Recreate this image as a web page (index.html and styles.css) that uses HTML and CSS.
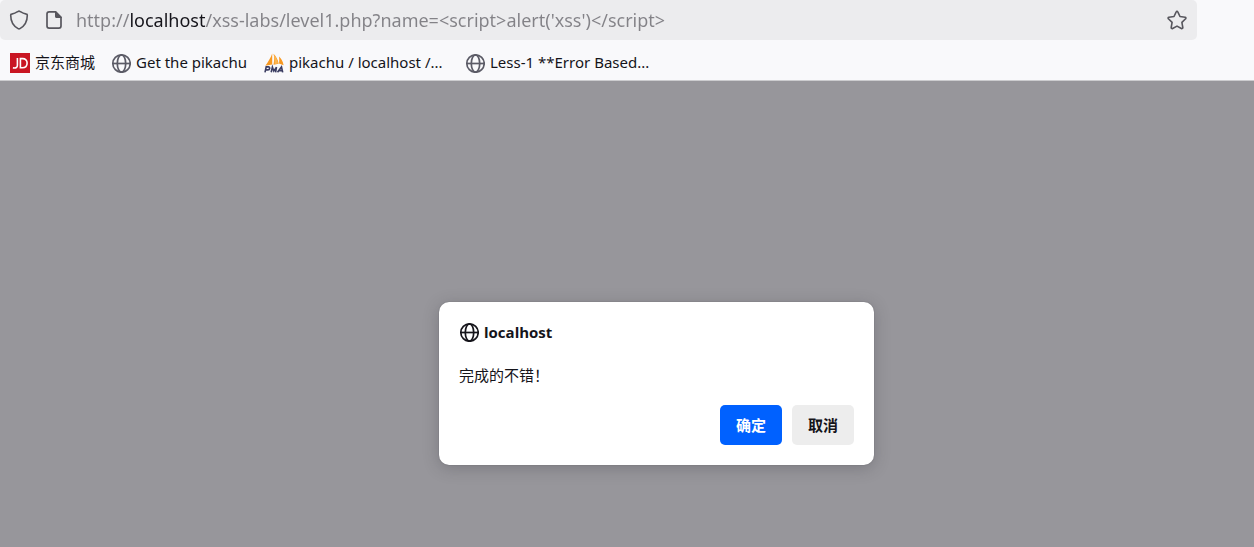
FILE: index.html
```html
<!DOCTYPE html>
<html lang="zh-CN">
<head>
<meta charset="utf-8">
<title>localhost</title>
<link rel="stylesheet" href="styles.css">
</head>
<body>
<svg class="defs" aria-hidden="true">
  <symbol id="globe" viewBox="0 0 20 20">
    <g fill="none" stroke="currentColor" stroke-width="1.7">
      <circle cx="10.500" cy="10.500" r="8.700"/>
      <ellipse cx="10.500" cy="10.500" rx="4.200" ry="8.700"/>
      <path d="M1.800 10.500h17.400"/>
    </g>
  </symbol>
</svg>
<header class="toolbar">
  <div class="address">
    <button class="icon-button" aria-label="跟踪保护">
      <svg class="icon" viewBox="0 0 20 20"><path d="M10 1.100c.5 0 .9.3 1.400.6 1.800 1.200 3.900 2 6 2.400.6.1.9.5.9 1.100 0 6-2.200 10.500-7.400 13.400-.6.4-1.200.4-1.800 0C3.900 15.700 1.700 11.200 1.700 5.200c0-.6.3-1 .9-1.100 2.100-.4 4.200-1.200 6-2.400.5-.3.900-.6 1.400-.6z" fill="none" stroke="currentColor" stroke-width="1.600"/></svg>
    </button>
    <button class="icon-button" aria-label="网站信息">
      <svg class="icon" viewBox="0 0 20 20"><path d="M11.500 1.900H5.200c-1.300 0-2.200.9-2.200 2.200v11.800c0 1.300.9 2.200 2.200 2.200h9.600c1.300 0 2.200-.9 2.200-2.200V7.400z" fill="none" stroke="currentColor" stroke-width="1.700"/><path d="M11 1.500v4.900c0 .9.600 1.500 1.500 1.500h5.100v-.8L12 1.300z" fill="currentColor"/></svg>
    </button>
    <input class="url" type="text" aria-label="网址" value="http://localhost/xss-labs/level1.php?name=&lt;script&gt;alert('xss')&lt;/script&gt;">
    <button class="icon-button" aria-label="添加书签">
      <svg class="icon" viewBox="0 0 20 20"><path d="M9.200 1.800c.3-.7 1.300-.7 1.600 0l2.200 4.700 5.100.7c.8.1 1.100 1.100.5 1.600L14.900 12.400l.9 5.100c.1.8-.7 1.400-1.400 1L10 16.100l-4.400 2.400c-.7.4-1.500-.2-1.400-1l.9-5.100L1.400 8.800c-.6-.5-.3-1.500.5-1.600l5.100-.7z" fill="none" stroke="currentColor" stroke-width="1.600" stroke-linejoin="round"/></svg>
    </button>
  </div>
  <nav class="bookmarks" aria-label="书签">
    <a class="bookmark" href="#">
      <svg class="icon" viewBox="0 0 20 20"><path d="M0 0h20v20H0z" fill="#c91623"/><path d="M7.400 4.900v7.300c0 2.200-1.200 3.100-4.500 2.700M10.400 5.600v9.200h1.900c3 0 4.800-1.700 4.800-4.700 0-2.900-1.700-4.500-4.500-4.500z" fill="none" stroke="#fff" stroke-width="1.600"/></svg>
      <span>京东商城</span>
    </a>
    <a class="bookmark" href="#"><svg class="icon globe"><use href="#globe"/></svg><span>Get the pikachu</span></a>
    <a class="bookmark" href="#">
      <svg class="icon" viewBox="0 0 20 20"><path d="M8.200.4C6.800 4.500 4 9 1.300 12.800l6.900-1.200zM9.500.8c.9 3 .8 7.200 0 11l5.200-1.100C14 6.700 12 3.300 9.500.8zM15 3.600c.4 2.500.3 5 0 7l4.600 1.600C19 8.700 17.300 5.800 15 3.600z" fill="#f79820"/><path d="M10 1.800l.8 9.400 3.300-.7C13.400 7 12 4 10 1.800z" fill="#fbb550"/><g fill="none" stroke="#3b3d62" stroke-width="1.600"><path d="M1 19.300l1.200-5.400h2.300c1.800 0 1.600 3-.6 3H1.700M7.200 19.300l1.200-5.200 1.400 4 2.700-4-.9 5.200M13.500 19.300l4-5.400 1.200 5.400M15 17.600h3.300"/></g></svg>
      <span>pikachu / localhost /...</span>
    </a>
    <a class="bookmark" href="#"><svg class="icon globe"><use href="#globe"/></svg><span>Less-1 **Error Based...</span></a>
  </nav>
</header>
<main class="page">
  <section class="dialog" role="dialog" aria-labelledby="dialog-title" aria-describedby="dialog-text">
    <h1 class="dialog-title"><svg class="icon"><use href="#globe"/></svg><span id="dialog-title">localhost</span></h1>
    <p class="dialog-text" id="dialog-text">完成的不错！</p>
    <div class="actions">
      <button class="button primary">确定</button>
      <button class="button">取消</button>
    </div>
  </section>
</main>
</body>
</html>
```
FILE: styles.css
```css
* { box-sizing: border-box; }
body {
  margin: 0;
  min-height: 100vh;
  display: flex;
  flex-direction: column;
  background: #97969b;
  color: #15141a;
  font-family: "Open Sans", "Noto Sans CJK SC", sans-serif;
  font-size: 15px;
}
button, input { font: inherit; border: 0; }
.defs { position: absolute; width: 0; height: 0; }
.icon { flex: none; width: 20px; height: 20px; display: block; }
.toolbar {
  background: #f9f9fb;
  border-bottom: 1px solid #cccccf;
  font-family: "Noto Sans", "Noto Sans CJK SC", sans-serif;
}
.address {
  display: flex;
  align-items: center;
  gap: 15px;
  height: 40px;
  margin-right: 57px;
  padding: 0 10px 0 9px;
  border-radius: 5px;
  background: #ececee;
  color: #57565d;
}
.icon-button { padding: 0; background: none; color: inherit; }
.url {
  flex: 1;
  min-width: 0;
  height: 40px;
  margin-left: -3px;
  padding: 0;
  outline: 0;
  font-size: 18px;
  color: transparent;
  background: linear-gradient(to right, #838287 54px, #15141a 54px 129px, #838287 129px);
  background-clip: text;
  -webkit-background-clip: text;
}
.bookmarks {
  display: grid;
  grid-template-columns: 86px 138px 186px auto;
  align-items: center;
  gap: 15px;
  height: 40px;
  padding: 5px 10px 0;
}
.bookmark {
  display: flex;
  align-items: flex-start;
  gap: 5px;
  line-height: 18px;
  color: inherit;
  text-decoration: none;
  white-space: nowrap;
}
.globe { color: #5b5b66; }
.page {
  flex: 1;
  padding: 221px 0 81px 59px;
}
.dialog {
  width: 435px;
  max-width: 100%;
  margin: 0 auto;
  padding: 20px;
  border-radius: 10px;
  background: #fff;
  box-shadow: 0 0 1px #55545a, 0 3px 16px rgba(40, 40, 46, .25);
}
.dialog-title {
  display: flex;
  align-items: center;
  gap: 5px;
  margin: 0;
  font-size: 15px;
  line-height: 20px;
}
.dialog-text { margin: 23px 0 20px; line-height: 20px; }
.actions { display: flex; justify-content: flex-end; gap: 10px; }
.button {
  height: 40px;
  padding: 0 16px 2px;
  border-radius: 5px;
  background: #ededed;
  color: #15141a;
  font-weight: 700;
}
.primary { background: #0061ff; color: #fff; }
```
